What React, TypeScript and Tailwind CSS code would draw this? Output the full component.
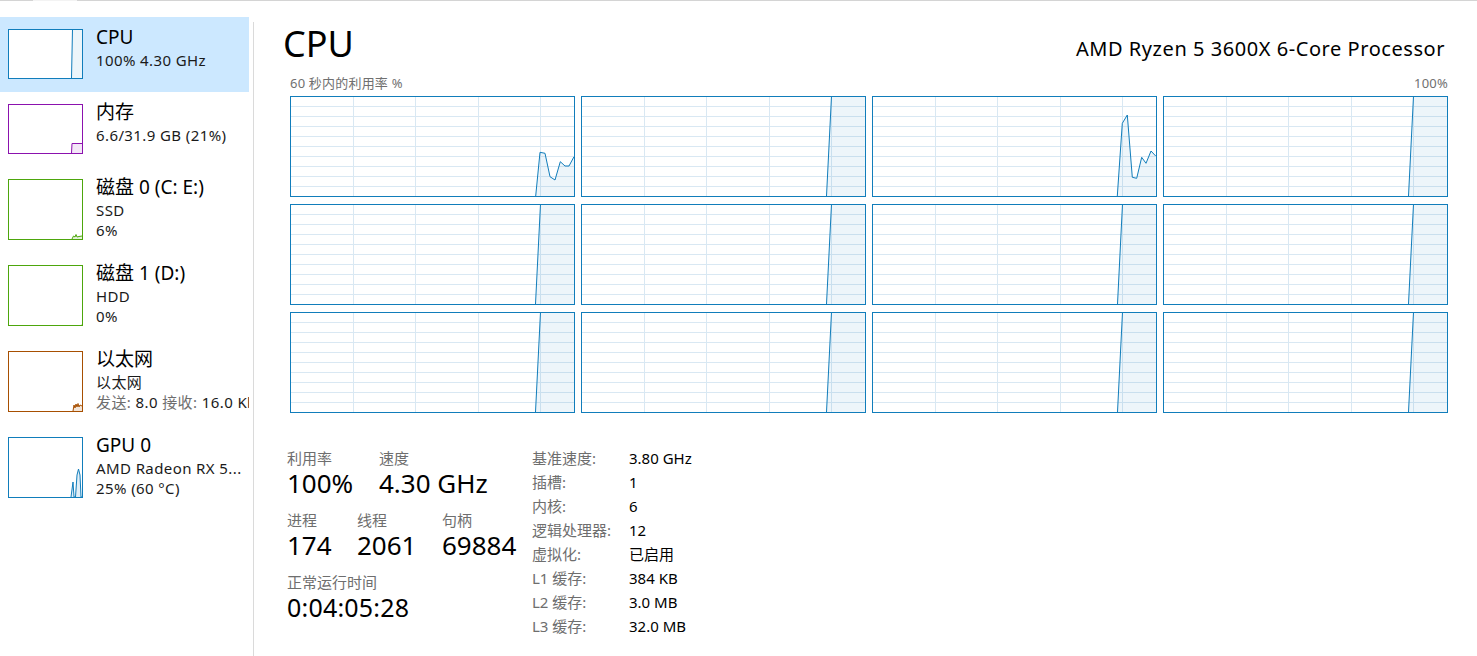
import React from 'react';

type Pt = [number, number];

const BLUE = '#117dbb';

const defaultPts: Pt[] = [
  [244.5, 99],
  [249.5, -1],
  [284, -1],
];
const box1: Pt[] = [
  [244.7, 99],
  [249, 55.3],
  [254, 56.3],
  [259, 79.7],
  [264, 83],
  [269.3, 64.7],
  [274, 69],
  [278, 69],
  [283, 59.7],
];
const box3: Pt[] = [
  [244.3, 99],
  [249.3, 26.3],
  [254.3, 18],
  [259.3, 80.3],
  [263.7, 81.3],
  [268.7, 60.3],
  [273, 66.3],
  [278, 54],
  [282.7, 59],
];

const graphs: Pt[][] = [
  box1, defaultPts, box3, defaultPts,
  defaultPts, defaultPts, defaultPts, defaultPts,
  defaultPts, defaultPts, defaultPts, defaultPts,
];

function CoreGraph({ pts }: { pts: Pt[] }) {
  const line = pts.map((p) => p.join(',')).join(' ');
  const last = pts[pts.length - 1];
  const poly = `${line} ${last[0]},99 ${pts[0][0]},99`;
  return (
    <div className="h-[101px] border border-[#117dbb] bg-white">
      <svg width="283" height="99" viewBox="0 0 283 99" className="block">
        {[1, 2, 3, 4, 5, 6, 7, 8, 9].map((k) => (
          <line key={'h' + k} x1="0" x2="283" y1={k * 10 - 0.5} y2={k * 10 - 0.5} stroke="#d9e8f3" strokeWidth="1" />
        ))}
        {[62.5, 124.5, 187.5, 249.5].map((x) => (
          <line key={'v' + x} x1={x} x2={x} y1="0" y2="99" stroke="#d9e8f3" strokeWidth="1" />
        ))}
        <polygon points={poly} fill={BLUE} fillOpacity="0.075" />
        <polyline points={line} fill="none" stroke={BLUE} strokeWidth="1" strokeLinejoin="round" />
      </svg>
    </div>
  );
}

function Thumb({ color, h, line, fillOpacity = 0.12 }: { color: string; h: number; line: string; fillOpacity?: number }) {
  const ih = h - 2;
  const pts = line.trim().split(/\s+/);
  const first = pts[0].split(',');
  const last = pts[pts.length - 1].split(',');
  const poly = `${line} ${last[0]},${ih} ${first[0]},${ih}`;
  return (
    <div className="bg-white border" style={{ borderColor: color, width: 75, height: h }}>
      <svg width="73" height={ih} viewBox={`0 0 73 ${ih}`} className="block">
        <polygon points={poly} fill={color} fillOpacity={fillOpacity} />
        <polyline points={line} fill="none" stroke={color} strokeWidth="1" />
      </svg>
    </div>
  );
}

function SideItem({
  selected,
  tall,
  thumb,
  children,
}: {
  selected?: boolean;
  tall?: boolean;
  thumb: React.ReactNode;
  children: React.ReactNode;
}) {
  return (
    <div className={`flex w-[249px] overflow-hidden ${tall ? 'h-[86px]' : 'h-[75px]'} ${selected ? 'bg-[#cce8ff]' : ''}`}>
      <div className="ml-[8px] mt-[12px] shrink-0">{thumb}</div>
      <div className="ml-[13px] pt-[7px] whitespace-nowrap">{children}</div>
    </div>
  );
}

const Title = ({ children }: { children: React.ReactNode }) => (
  <div className="text-[19px] leading-[26px] text-black">{children}</div>
);
const Sub = ({ children }: { children: React.ReactNode }) => (
  <div className="text-[15px] leading-[20px] tracking-[0.4px] text-[#1a1a1a]">{children}</div>
);

function Stat({ label, value, w }: { label: string; value: string; w?: string }) {
  return (
    <div className={w}>
      <div className="text-[15px] leading-[18px] text-[#6e6e6e]">{label}</div>
      <div className="text-[26px] leading-[32px] text-black">{value}</div>
    </div>
  );
}

const specs: [string, string][] = [
  ['基准速度:', '3.80 GHz'],
  ['插槽:', '1'],
  ['内核:', '6'],
  ['逻辑处理器:', '12'],
  ['虚拟化:', '已启用'],
  ['L1 缓存:', '384 KB'],
  ['L2 缓存:', '3.0 MB'],
  ['L3 缓存:', '32.0 MB'],
];

export default function App() {
  return (
    <div className="w-[1477px] h-[656px] bg-white overflow-hidden font-['Noto_Sans','Noto_Sans_CJK_SC',sans-serif]">
      <div className="flex h-px">
        <div className="w-[33px] bg-[#d4d4d4]" />
        <div className="w-[44px] bg-[#f3f3f3]" />
        <div className="flex-1 bg-[#d4d4d4]" />
      </div>
      <div className="flex h-[655px]">
        <div className="w-[253px] pt-[16px] flex flex-col shrink-0">
          <SideItem
            selected
            thumb={<Thumb color={BLUE} h={50} line="62.5,48 63.5,-1 74,-1" fillOpacity={0.08} />}
          >
            <Title>CPU</Title>
            <Sub>100% 4.30 GHz</Sub>
          </SideItem>
          <SideItem thumb={<Thumb color="#8b12ae" h={50} line="62.5,48 63,38.5 73,38.5" fillOpacity={0.1} />}>
            <Title>内存</Title>
            <Sub>6.6/31.9 GB (21%)</Sub>
          </SideItem>
          <SideItem
            tall
            thumb={<Thumb color="#4da60c" h={61} line="63,59 64.5,56 66,57 67,54.5 68,57 70,56.5 73,56" fillOpacity={0.15} />}
          >
            <Title>磁盘 0 (C: E:)</Title>
            <Sub>SSD</Sub>
            <Sub>6%</Sub>
          </SideItem>
          <SideItem tall thumb={<Thumb color="#4da60c" h={61} line="72.5,59 73,59" />}>
            <Title>磁盘 1 (D:)</Title>
            <Sub>HDD</Sub>
            <Sub>0%</Sub>
          </SideItem>
          <SideItem
            tall
            thumb={
              <Thumb
                color="#a74f01"
                h={61}
                line="64,59 65,53 66,56 67,52 68,55 69,51.5 70,55 71,53 73,54"
                fillOpacity={0.15}
              />
            }
          >
            <Title>以太网</Title>
            <Sub>以太网</Sub>
            <Sub>
              <span className="text-[#6e6e6e]">发送:</span> 8.0 <span className="text-[#6e6e6e]">接收:</span> 16.0 Kbps
            </Sub>
          </SideItem>
          <SideItem
            tall
            thumb={
              <Thumb
                color={BLUE}
                h={61}
                line="62,59 64,44 65,59 66.5,59 68,37 69.5,31 71,37 72,59 73,59"
                fillOpacity={0.12}
              />
            }
          >
            <Title>GPU 0</Title>
            <Sub>AMD Radeon RX 5...</Sub>
            <Sub>25% (60 °C)</Sub>
          </SideItem>
        </div>
        <div className="w-px bg-[#dadada] mt-[21px] shrink-0" />
        <div className="flex-1 pl-[29px] pt-[25px]">
          <div className="w-[1165px]">
            <div className="flex justify-between items-start h-[36px]">
              <div className="text-[36px] leading-[36px] text-black">CPU</div>
              <div className="text-[20px] leading-[26px] mt-[10px] pr-[3px] tracking-[0.55px] text-black">
                AMD Ryzen 5 3600X 6-Core Processor
              </div>
            </div>
            <div className="ml-[7px]">
              <div className="flex justify-between mt-[13px] text-[13px] leading-[16px] tracking-[0.2px] text-[#707070]">
                <span>60 秒内的利用率 %</span>
                <span>100%</span>
              </div>
              <div className="mt-[5px] w-[1158px] grid grid-cols-4 gap-x-[6px] gap-y-[7px]">
                {graphs.map((g, i) => (
                  <CoreGraph key={i} pts={g} />
                ))}
              </div>
            </div>
            <div className="ml-[4px] mt-[33px] flex">
              <div className="w-[245px] pt-[3px] flex flex-col gap-[12px]">
                <div className="flex">
                  <Stat w="w-[92px]" label="利用率" value="100%" />
                  <Stat label="速度" value="4.30 GHz" />
                </div>
                <div className="flex">
                  <Stat w="w-[70px]" label="进程" value="174" />
                  <Stat w="w-[85px]" label="线程" value="2061" />
                  <Stat label="句柄" value="69884" />
                </div>
                <div>
                  <div className="text-[15px] leading-[18px] text-[#6e6e6e]">正常运行时间</div>
                  <div className="text-[25px] leading-[32px] tracking-[0.2px] text-black">0:04:05:28</div>
                </div>
              </div>
              <div className="grid grid-cols-[97px_auto] text-[15px] leading-[24px]">
                {specs.map(([k, v]) => (
                  <React.Fragment key={k}>
                    <div className="text-[#6e6e6e]">{k}</div>
                    <div className="text-black">{v}</div>
                  </React.Fragment>
                ))}
              </div>
            </div>
          </div>
        </div>
      </div>
    </div>
  );
}
